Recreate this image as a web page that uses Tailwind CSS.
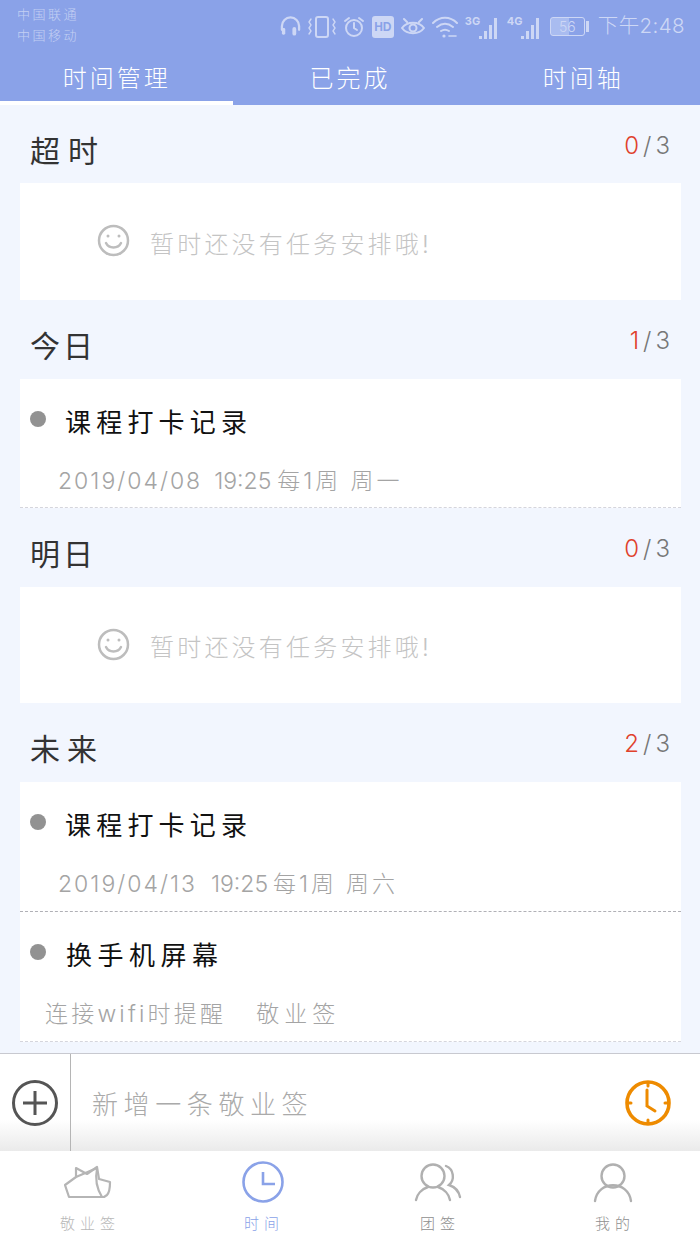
<!DOCTYPE html>
<html lang="zh-CN">
<head>
    <meta charset="UTF-8">
    <meta name="viewport" content="width=device-width, initial-scale=1.0">
    <title>时间管理</title>
    <script src="https://cdn.jsdelivr.net/npm/@tailwindcss/browser@4"></script>
</head>
<body class="w-[700px] h-[1244px] overflow-hidden flex flex-col bg-[#f2f6fe] font-['Inter','Noto_Sans_CJK_SC',sans-serif] font-light">
    <!-- status bar + tabs -->
    <header class="h-[105px] bg-[#8aa2e8] flex flex-col shrink-0">
        <div class="h-[52px] flex justify-between">
            <div class="pl-[17px] pt-[4px] text-[13px] leading-[21px] tracking-[2.5px] text-white/50">
                <p>中国联通</p>
                <p>中国移动</p>
            </div>
            <div class="flex items-center gap-[7px] pr-[15px] pt-[1px] text-[#cdd7f5]">
                <svg class="w-[21px] h-[22px]" viewBox="0 0 22 22" fill="none" stroke="currentColor" stroke-width="2.4" stroke-linecap="round"><path d="M2 14V10a9 9 0 0 1 18 0v4"/><rect x="2" y="12" width="3.5" height="7" rx="1.5" fill="currentColor" stroke="none"/><rect x="13" y="11" width="4" height="9" rx="2" fill="currentColor" stroke="none"/></svg>
                <svg class="w-[28px] h-[24px]" viewBox="0 0 28 24" fill="none" stroke="currentColor" stroke-width="2" stroke-linecap="round"><rect x="8" y="2" width="12" height="20" rx="2"/><path d="M3 4l-2 3 2 3-2 3 2 3-2 3M25 4l2 3-2 3 2 3-2 3 2 3" stroke-width="1.4"/></svg>
                <svg class="w-[22px] h-[22px]" viewBox="0 0 22 22" fill="none" stroke="currentColor" stroke-width="2" stroke-linecap="round"><circle cx="11" cy="12" r="8"/><path d="M11 7v5l3 2M2 5l4-3M20 5l-4-3"/></svg>
                <span class="w-[22px] h-[22px] rounded-[3px] bg-[#cdd7f5] text-[#8aa2e8] text-[12px] leading-[22px] text-center font-bold font-['Liberation_Sans',sans-serif]">HD</span>
                <svg class="w-[24px] h-[20px]" viewBox="0 0 24 20" fill="none" stroke="currentColor" stroke-width="2" stroke-linecap="round"><path d="M1 11c5-7 17-7 22 0-5 7-17 7-22 0zM3 2l3 3M21 2l-3 3"/><circle cx="12" cy="11" r="3.5"/></svg>
                <svg class="w-[26px] h-[22px]" viewBox="0 0 26 22" fill="none" stroke="currentColor" stroke-width="2" stroke-linecap="round"><path d="M1 7c7-7 17-7 24 0M5 11c5-4 11-4 16 0M9 15c3-2 5-2 8 0"/><circle cx="12" cy="20" r="1.6" fill="currentColor" stroke="none"/><path d="M17 20h7" stroke-width="1.6"/></svg>
                <div class="flex items-end h-[24px] w-[34px]">
                    <span class="self-start text-[11px] leading-[12px] font-bold mr-[1px] w-[13px]">3G</span>
                    <span class="w-[3px] h-[3px] bg-current"></span><span class="w-[3px] h-[8px] ml-[2px] bg-current"></span><span class="w-[3px] h-[14px] ml-[2px] bg-current"></span><span class="w-[3px] h-[21px] ml-[2px] bg-current"></span>
                </div>
                <div class="flex items-end h-[24px] w-[34px] ml-[1px]">
                    <span class="self-start text-[11px] leading-[12px] font-bold mr-[1px] w-[13px]">4G</span>
                    <span class="w-[3px] h-[3px] bg-current"></span><span class="w-[3px] h-[8px] ml-[2px] bg-current"></span><span class="w-[3px] h-[14px] ml-[2px] bg-current"></span><span class="w-[3px] h-[21px] ml-[2px] bg-current"></span>
                </div>
                <div class="flex items-center ml-[2px]">
                    <div class="w-[35px] h-[19px] rounded-[3px] border border-[#cdd7f5] text-[14px] leading-[17px] text-center bg-[linear-gradient(90deg,#a9bcf0_56%,transparent_56%)]">56</div>
                    <span class="w-[3px] h-[11px] ml-[1px] bg-[#cdd7f5]"></span>
                </div>
                <span class="text-[20.5px] ml-[2px] tracking-[0.4px]">下午2:48</span>
            </div>
        </div>
        <nav class="h-[53px] grid grid-cols-3 text-white text-[24px] tracking-[3px] text-center">
            <div class="border-b-4 border-white pt-[5px] leading-[44px]">时间管理</div>
            <div class="pt-[5px] leading-[44px]">已完成</div>
            <div class="pt-[5px] leading-[44px]">时间轴</div>
        </nav>
    </header>

    <main class="flex-1 min-h-0">
        <section>
            <div class="h-[78px] flex justify-between pl-[30px] pr-[30px] pt-[24px]">
                <h2 class="text-[30px] leading-[44px] text-[#333] tracking-[8px] font-normal">超时</h2>
                <p class="text-[24px] leading-[34px] text-[#777]"><span class="text-[#e0412c] tracking-[4px]">0</span><span class="tracking-[4px]">/</span>3</p>
            </div>
            <div class="mx-[20px] w-[661px] h-[117px] bg-white flex items-center pl-[77px]">
                <svg class="w-[33px] h-[33px] mr-[20px] -mt-[2px]" viewBox="0 0 33 33" fill="none" stroke="#bdbdbd" stroke-width="2.5" stroke-linecap="round"><circle cx="16.5" cy="16.5" r="14.5"/><path d="M9 19c3 6 12 6 15 0"/><circle cx="11" cy="12" r="1.5" fill="#bdbdbd" stroke="none"/><circle cx="22" cy="12" r="1.5" fill="#bdbdbd" stroke="none"/></svg>
                <span class="pt-[6px] text-[24px] tracking-[3.2px] text-[#c4c4c4]">暂时还没有任务安排哦!</span>
            </div>
        </section>

        <section>
            <div class="h-[79px] flex justify-between pl-[30px] pr-[30px] pt-[24px]">
                <h2 class="text-[30px] leading-[44px] text-[#333] tracking-[3px] font-normal">今日</h2>
                <p class="text-[24px] leading-[34px] text-[#777]"><span class="text-[#e0412c] tracking-[4px]">1</span><span class="tracking-[4px]">/</span>3</p>
            </div>
            <div class="mx-[20px] w-[661px] h-[129px] bg-white border-b border-dashed border-[#d5d5dc]">
                <div class="flex items-center pl-[10px] pt-[20px] h-[62px]">
                    <span class="w-[16px] h-[16px] rounded-full bg-[#929292] -mt-[2px]"></span>
                    <h3 class="pt-[4px] ml-[19px] text-[26px] tracking-[5.2px] text-[#111] font-normal">课程打卡记录</h3>
                </div>
                <p class="pl-[38px] pt-[22px] text-[23px] leading-[36px] text-[#a4a4a4]"><span class="tracking-[2px]">2019/04/08</span><span class="ml-[12px]">19:25</span><span class="ml-[6px] tracking-[3px]">每1周</span><span class="ml-[9px] tracking-[3px]">周一</span></p>
            </div>
        </section>

        <section>
            <div class="h-[79px] flex justify-between pl-[30px] pr-[30px] pt-[24px]">
                <h2 class="text-[30px] leading-[44px] text-[#333] tracking-[3px] font-normal">明日</h2>
                <p class="text-[24px] leading-[34px] text-[#777]"><span class="text-[#e0412c] tracking-[4px]">0</span><span class="tracking-[4px]">/</span>3</p>
            </div>
            <div class="mx-[20px] w-[661px] h-[116px] bg-white flex items-center pl-[77px]">
                <svg class="w-[33px] h-[33px] mr-[20px] -mt-[2px]" viewBox="0 0 33 33" fill="none" stroke="#bdbdbd" stroke-width="2.5" stroke-linecap="round"><circle cx="16.5" cy="16.5" r="14.5"/><path d="M9 19c3 6 12 6 15 0"/><circle cx="11" cy="12" r="1.5" fill="#bdbdbd" stroke="none"/><circle cx="22" cy="12" r="1.5" fill="#bdbdbd" stroke="none"/></svg>
                <span class="pt-[6px] text-[24px] tracking-[3.2px] text-[#c4c4c4]">暂时还没有任务安排哦!</span>
            </div>
        </section>

        <section>
            <div class="h-[79px] flex justify-between pl-[30px] pr-[30px] pt-[24px]">
                <h2 class="text-[30px] leading-[44px] text-[#333] tracking-[7px] font-normal">未来</h2>
                <p class="text-[24px] leading-[34px] text-[#777]"><span class="text-[#e0412c] tracking-[4px]">2</span><span class="tracking-[4px]">/</span>3</p>
            </div>
            <div class="mx-[20px] w-[661px] bg-white">
                <div class="h-[130px] border-b border-dashed border-[#b0b0b6]">
                    <div class="flex items-center pl-[10px] pt-[20px] h-[62px]">
                        <span class="w-[16px] h-[16px] rounded-full bg-[#929292] -mt-[2px]"></span>
                        <h3 class="pt-[4px] ml-[19px] text-[26px] tracking-[5.2px] text-[#111] font-normal">课程打卡记录</h3>
                    </div>
                    <p class="pl-[38px] pt-[22px] text-[23px] leading-[36px] text-[#a4a4a4]"><span class="tracking-[2px]">2019/04/13</span><span class="ml-[14px]">19:25</span><span class="ml-[5px] tracking-[3px]">每1周</span><span class="ml-[9px] tracking-[3px]">周六</span></p>
                </div>
                <div class="h-[130px] border-b border-dashed border-[#d5d5dc]">
                    <div class="flex items-center pl-[10px] pt-[20px] h-[62px]">
                        <span class="w-[16px] h-[16px] rounded-full bg-[#929292] -mt-[2px]"></span>
                        <h3 class="pt-[4px] ml-[20px] text-[26px] tracking-[5.5px] text-[#111] font-normal">换手机屏幕</h3>
                    </div>
                    <p class="pl-[25px] pt-[22px] text-[23px] leading-[36px] text-[#a4a4a4]"><span class="tracking-[3.2px]">连接wifi时提醒</span><span class="ml-[30px] tracking-[5px]">敬业签</span></p>
                </div>
            </div>
        </section>
    </main>

    <!-- quick add -->
    <div class="h-[98px] shrink-0 flex border-t border-[#c8c9d0] bg-[linear-gradient(180deg,#fff_68%,#eaeaea_100%)]">
        <div class="w-[71px] border-r border-[#b5b5b5] flex items-center justify-center pr-[1px]">
            <svg class="w-[48px] h-[48px]" viewBox="0 0 48 48" fill="none" stroke="#555" stroke-width="3"><circle cx="24" cy="24" r="21.5"/><path d="M12 24h24M24 12v24"/></svg>
        </div>
        <p class="flex-1 pl-[21px] text-[26px] leading-[102px] tracking-[5.6px] text-[#aaa]">新增一条敬业签</p>
        <div class="flex items-center pr-[29px]">
            <svg class="w-[46px] h-[46px]" viewBox="0 0 46 46" fill="none" stroke="#ee8b00" stroke-linecap="round"><circle cx="23" cy="23" r="21" stroke-width="3.6"/><path d="M22 10v16l8 5M23 3v3M23 40v3M3 23h3M40 23h3" stroke-width="3"/></svg>
        </div>
    </div>

    <!-- bottom nav -->
    <nav class="h-[93px] shrink-0 grid grid-cols-4 bg-white text-center text-[15px] leading-[22px] tracking-[5px]">
        <div class="flex flex-col items-center pt-[14px] text-[#b8b8b8]">
            <svg class="w-[48px] h-[36px]" viewBox="0 0 48 36" fill="none" stroke="#b5b5b5" stroke-width="2.2" stroke-linejoin="round"><path d="M1 20L12 12 12 3 23 9 33 2 35 14 46 17C46 23 45 28 43 30L40 32H5Z"/><path d="M33 4C31 14 33 24 38 32"/><path d="M12 12L33 3"/></svg>
            <span class="mt-[12px] pl-[5px]">敬业签</span>
        </div>
        <div class="flex flex-col items-center pt-[10px] text-[#8aa2e8]">
            <svg class="w-[42px] h-[42px]" viewBox="0 0 42 42" fill="none" stroke="#8aa2e8" stroke-width="2.6"><circle cx="21" cy="21" r="19.5"/><path d="M21 11v12h12"/></svg>
            <span class="mt-[10px] pl-[3px]">时间</span>
        </div>
        <div class="flex flex-col items-center pt-[12px] text-[#8f8f8f]">
            <svg class="w-[48px] h-[40px]" viewBox="0 0 48 40" fill="none" stroke="#b0b0b0" stroke-width="2.4" stroke-linecap="round"><circle cx="19" cy="13" r="11.5"/><path d="M2 37C3 31 8 26 14 24M24 24C30 26 35 31 36 37M32 3C40 6 41 17 35 22C41 24 45 29 46 34"/></svg>
            <span class="mt-[10px] pl-[5px]">团签</span>
        </div>
        <div class="flex flex-col items-center pt-[12px] text-[#8f8f8f]">
            <svg class="w-[40px] h-[40px]" viewBox="0 0 40 40" fill="none" stroke="#b0b0b0" stroke-width="2.4" stroke-linecap="round"><circle cx="20" cy="13" r="11.5"/><path d="M2 38c3-21 33-21 36 0"/></svg>
            <span class="mt-[10px] pl-[5px]">我的</span>
        </div>
    </nav>
</body>
</html>
